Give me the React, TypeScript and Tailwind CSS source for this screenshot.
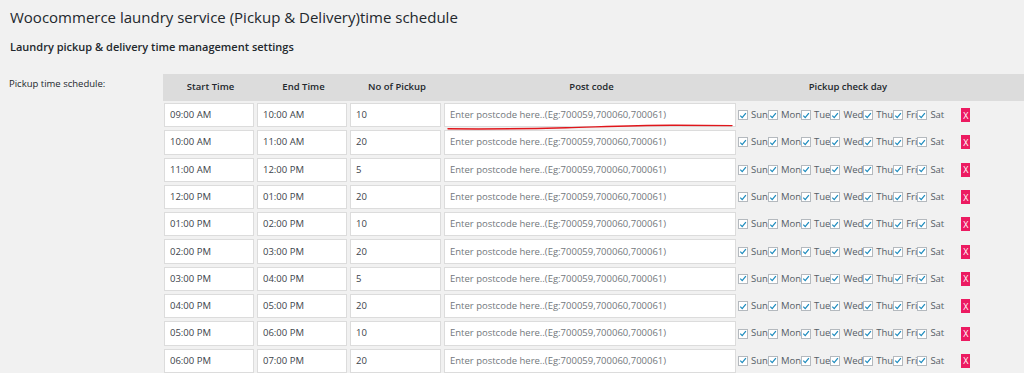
const rows = [
  { start: "09:00 AM", end: "10:00 AM", count: "10" },
  { start: "10:00 AM", end: "11:00 AM", count: "20" },
  { start: "11:00 AM", end: "12:00 PM", count: "5" },
  { start: "12:00 PM", end: "01:00 PM", count: "20" },
  { start: "01:00 PM", end: "02:00 PM", count: "10" },
  { start: "02:00 PM", end: "03:00 PM", count: "20" },
  { start: "03:00 PM", end: "04:00 PM", count: "5" },
  { start: "04:00 PM", end: "05:00 PM", count: "20" },
  { start: "05:00 PM", end: "06:00 PM", count: "10" },
  { start: "06:00 PM", end: "07:00 PM", count: "20" },
]

const days = ["Sun", "Mon", "Tue", "Wed", "Thu", "Fri", "Sat"]

function Check() {
  return (
    <span className="flex h-[10px] w-[10px] shrink-0 items-center justify-center border border-[#b4b9be] bg-white">
      <svg viewBox="0 0 10 10" className="h-[9px] w-[9px]">
        <path d="M1.6 5.2 L4 7.6 L8.6 2" fill="none" stroke="#1e8cbe" strokeWidth="1.6" />
      </svg>
    </span>
  )
}

function Field({ value, w, muted }: { value: string; w: string; muted?: boolean }) {
  return (
    <div
      className={`flex h-full items-center border border-[#dcdcdc] bg-white px-[5px] ${w} ${
        muted ? "text-[#72777c]" : "text-[#3c434a]"
      }`}
    >
      {value}
    </div>
  )
}

export default function App() {
  return (
    <div
      className="min-h-[373px] bg-[#f1f1f1] text-[#23282d]"
      style={{ fontFamily: '"Open Sans", "Noto Sans", sans-serif' }}
    >
      <div className="px-[10px] pt-[5px]">
        <h1 className="text-[15px] leading-[24px] font-normal text-[#23282d]">
          Woocommerce laundry service (Pickup &amp; Delivery)time schedule
        </h1>
        <h2 className="mt-[10px] text-[11px] leading-[16px] font-semibold text-[#23282d]">
          Laundry pickup &amp; delivery time management settings
        </h2>
      </div>

      <div className="mt-[19px] flex">
        <div className="w-[163px] shrink-0 pl-[9px] pt-[3px] text-[9.5px] text-[#23282d]">
          Pickup time schedule:
        </div>

        <div className="relative flex-1 text-[9.5px]">
          {/* header */}
          <div className="flex h-[27px] items-center bg-[#dcdcdc] pl-[1px] text-[9.5px] font-semibold text-[#23282d]">
            <div className="w-[93px] text-center">Start Time</div>
            <div className="w-[93px] text-center">End Time</div>
            <div className="w-[94px] text-center">No of Pickup</div>
            <div className="w-[295px] text-center">Post code</div>
            <div className="w-[218px] text-center">Pickup check day</div>
          </div>

          <div className="mt-[2px] flex flex-col gap-[3px] pl-[1px]">
            {rows.map((r) => (
              <div key={r.start} className="flex h-[24.3px] items-center gap-[3px]">
                <Field value={r.start} w="w-[90px]" />
                <Field value={r.end} w="w-[90px]" />
                <Field value={r.count} w="w-[91px]" />
                <Field value="Enter postcode here..(Eg:700059,700060,700061)" w="w-[292px]" muted />
                <div className="ml-[-1px] flex items-center text-[#555d66]">
                  {days.map((d) => (
                    <span key={d} className="flex items-center">
                      <Check />
                      <span className="pl-[3px]">{d}</span>
                    </span>
                  ))}
                </div>
                <span className="ml-[14px] flex h-[14px] w-[9px] items-center justify-center bg-[#ec1b61] text-[9px] leading-none text-white">
                  X
                </span>
              </div>
            ))}
          </div>

          {/* hand-drawn red underline annotation */}
          <svg
            className="pointer-events-none absolute left-[283px] top-[47px] h-[10px] w-[290px]"
            viewBox="0 0 290 10"
          >
            <path
              d="M2 7.8 C 40 8.2, 80 7.8, 120 6.8 C 160 5.6, 190 4, 230 4.2 C 255 4.3, 275 4.5, 286 4.6"
              fill="none"
              stroke="#e0161b"
              strokeWidth="1.4"
              strokeLinecap="round"
            />
          </svg>
        </div>
      </div>
    </div>
  )
}
